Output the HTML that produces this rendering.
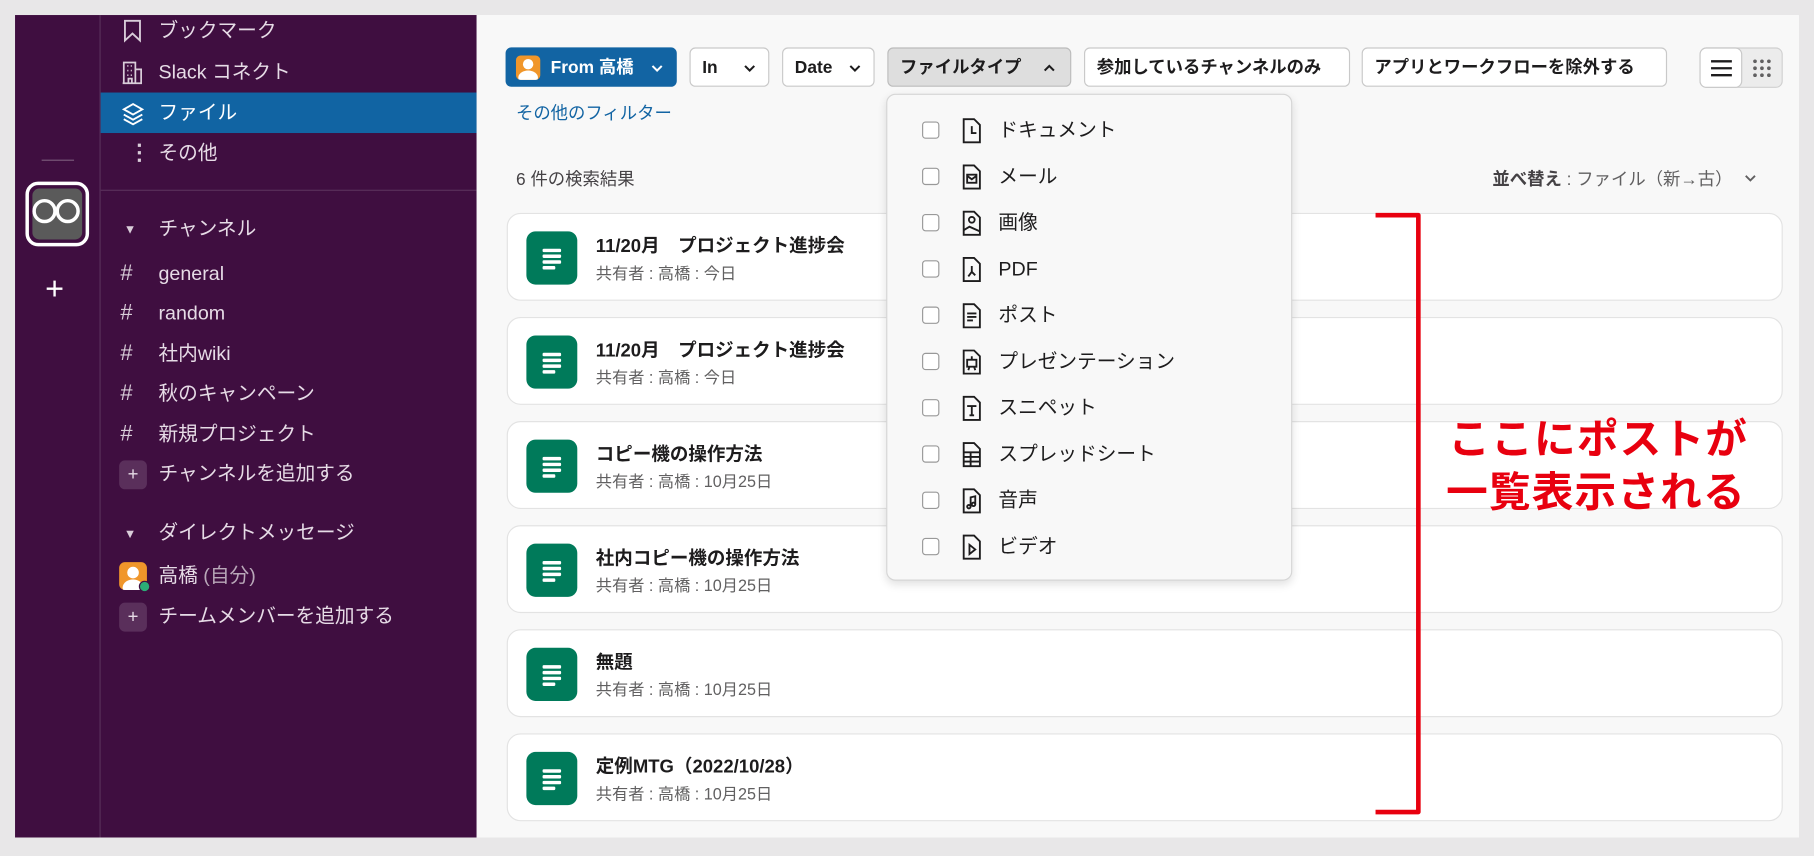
<!DOCTYPE html>
<html><head><meta charset="utf-8">
<style>
*{box-sizing:border-box;margin:0;padding:0}
html,body{width:1814px;height:856px;overflow:hidden;background:#e8e7e8;font-family:"Liberation Sans","Noto Sans CJK JP",sans-serif}
#w{position:absolute;left:0;top:0;width:1568px;height:740px;transform:scale(1.15689,1.15676);transform-origin:0 0}
.a{position:absolute}
.rail{left:13px;top:13px;width:73px;height:711px;background:#3f0e40}
.side{left:86px;top:13px;width:326px;height:711px;background:#3f0e40;border-left:1px solid #58305a}
.main{left:412px;top:13px;width:1143px;height:711px;background:#f8f8f8}
.si{position:absolute;left:137px;color:#e6dbe6;font-size:17px;line-height:20px;white-space:nowrap}
.ic{position:absolute;left:104px;color:#d9cdd9;font-size:19px;line-height:20px}
.btn{position:absolute;top:41px;height:34px;border:1px solid #c9c9c9;border-radius:5px;background:#fff;font-size:15px;font-weight:bold;color:#1d1c1d;line-height:33px;padding-left:10px;white-space:nowrap}
.chev{position:absolute;right:11px;top:13px}
.card{position:absolute;left:438px;width:1103px;height:76px;background:#fff;border:1px solid #e3e3e3;border-radius:12px}
.fi{position:absolute;left:16px;top:15px;width:44px;height:46px;background:#007a5a;border-radius:8px}
.fi i{position:absolute;left:14px;height:2.5px;background:#fff;border-radius:1px}
.ct{position:absolute;left:76px;top:14px;font-size:16px;font-weight:bold;color:#1d1c1d;white-space:nowrap}
.cs{position:absolute;left:76px;top:41px;font-size:14px;color:#616061;white-space:nowrap}
.dd{left:766px;top:81px;width:351px;height:421px;background:#f8f8f8;border:1px solid #d6d6d6;border-radius:8px;box-shadow:0 3px 8px rgba(0,0,0,.12)}
.row{position:absolute;left:30px;height:20px;width:300px}
.cb{position:absolute;left:0;top:2px;width:15px;height:15px;border:1.5px solid #999;border-radius:3px;background:#fff}
.fic{position:absolute;left:34px;top:-2px}
.lt{position:absolute;left:66px;top:0;font-size:17px;color:#1d1c1d;line-height:20px;white-space:nowrap}
.red{color:#e8000f;font-weight:bold;font-size:36px;line-height:44px;white-space:nowrap;letter-spacing:1px}
</style></head><body><div id="w">
<div class="a rail"></div>
<div class="a" style="left:36px;top:138px;width:28px;height:1px;background:#7a5a7b"></div>
<div class="a" style="left:22px;top:157px;width:55px;height:56px;border:3px solid #fff;border-radius:11px;background:#3f0e40;padding:3px"><div style="width:100%;height:100%;background:#5a5a5a;border-radius:6px;position:relative">
<div class="a" style="left:0px;top:9px;width:21px;height:21px;border:3px solid #fff;border-radius:50%"></div>
<div class="a" style="left:20px;top:9px;width:21px;height:21px;border:3px solid #fff;border-radius:50%"></div></div></div>
<div class="a" style="left:39px;top:236px;color:#fff;font-size:28px;line-height:28px;font-weight:300">+</div>
<div class="a side"></div>
<div class="a" style="left:87px;top:80px;width:325px;height:35px;background:#1164a3"></div>
<div class="a" style="left:87px;top:164px;width:325px;height:1px;background:#5a305b"></div>
<svg class="a" style="left:104px;top:16px" width="22" height="22" viewBox="0 0 22 22" fill="none" stroke="#d9cdd9" stroke-width="1.6"><path d="M4 2h13v17l-6.5-6-6.5 6z"/></svg>
<div class="si" style="top:17px">ブックマーク</div>
<svg class="a" style="left:104px;top:52px" width="22" height="22" viewBox="0 0 22 22" fill="none" stroke="#d9cdd9" stroke-width="1.5"><path d="M3 20V2h10v18M13 8h5v12H2M6 5h1M9 5h1M6 9h1M9 9h1M6 13h1M9 13h1M7 20v-4h3v4"/></svg>
<div class="si" style="top:53px">Slack コネクト</div>
<svg class="a" style="left:104px;top:88px" width="22" height="22" viewBox="0 0 22 22" fill="none" stroke="#fff" stroke-width="1.6"><path d="M11 2l8 4.5-8 4.5-8-4.5zM3 11l8 4.5 8-4.5M3 15l8 4.5 8-4.5"/></svg>
<div class="si" style="top:88px;color:#fff">ファイル</div>
<div class="ic" style="left:111px;top:123px;font-weight:bold">⋮</div>
<div class="si" style="top:123px">その他</div>
<div class="ic" style="left:107px;top:189px;font-size:11px">▼</div>
<div class="si" style="top:188px">チャンネル</div>
<div class="ic" style="top:227px">#</div><div class="si" style="top:227px">general</div>
<div class="ic" style="top:261px">#</div><div class="si" style="top:261px">random</div>
<div class="ic" style="top:296px">#</div><div class="si" style="top:296px">社内wiki</div>
<div class="ic" style="top:331px">#</div><div class="si" style="top:331px">秋のキャンペーン</div>
<div class="ic" style="top:366px">#</div><div class="si" style="top:366px">新規プロジェクト</div>
<div class="a" style="left:103px;top:398px;width:24px;height:25px;background:#5a2f5b;border-radius:5px;color:#e6dbe6;text-align:center;font-size:16px;line-height:25px">+</div>
<div class="si" style="top:400px">チャンネルを追加する</div>
<div class="ic" style="left:107px;top:452px;font-size:11px">▼</div>
<div class="si" style="top:451px">ダイレクトメッセージ</div>
<div class="a" style="left:103px;top:486px;width:24px;height:24px;background:#f0962a;border-radius:5px;overflow:hidden"><div class="a" style="left:7px;top:4px;width:10px;height:10px;border-radius:50%;background:#fff"></div><div class="a" style="left:3px;top:15px;width:18px;height:14px;border-radius:50%;background:#fff"></div></div>
<div class="a" style="left:120px;top:502px;width:10px;height:10px;border-radius:50%;background:#2bac76;border:1.5px solid #3f0e40"></div>
<div class="si" style="top:488px">高橋 <span style="color:#b9a8b9">(自分)</span></div>
<div class="a" style="left:103px;top:521px;width:24px;height:25px;background:#5a2f5b;border-radius:5px;color:#e6dbe6;text-align:center;font-size:16px;line-height:25px">+</div>
<div class="si" style="top:523px">チームメンバーを追加する</div>

<div class="a main"></div>
<div class="btn" style="left:437px;width:148px;background:#1264a3;border-color:#1264a3;color:#fff;padding-left:38px">From 高橋<svg class="chev" width="10" height="8"><path d="M1 2l4 4 4-4" fill="none" stroke="#fff" stroke-width="1.8"/></svg></div>
<div class="a" style="left:446px;top:48px;width:21px;height:21px;background:#f0962a;border-radius:4px;overflow:hidden"><div class="a" style="left:6px;top:3px;width:9px;height:9px;border-radius:50%;background:#fff"></div><div class="a" style="left:2px;top:13px;width:17px;height:12px;border-radius:50%;background:#fff"></div></div>
<div class="btn" style="left:596px;width:69px">In<svg class="chev" width="10" height="8"><path d="M1 2l4 4 4-4" fill="none" stroke="#1d1c1d" stroke-width="1.8"/></svg></div>
<div class="btn" style="left:676px;width:80px">Date<svg class="chev" width="10" height="8"><path d="M1 2l4 4 4-4" fill="none" stroke="#1d1c1d" stroke-width="1.8"/></svg></div>
<div class="btn" style="left:767px;width:159px;background:#dedede;border-color:#bcbcbc">ファイルタイプ<svg class="chev" style="right:13px" width="10" height="8"><path d="M1 6l4-4 4 4" fill="none" stroke="#1d1c1d" stroke-width="1.8"/></svg></div>
<div class="btn" style="left:937px;width:230px">参加しているチャンネルのみ</div>
<div class="btn" style="left:1177px;width:264px">アプリとワークフローを除外する</div>
<div class="a" style="left:1469px;top:41px;width:72px;height:35px;border:1px solid #d0d0d0;border-radius:6px;background:#ececec"></div>
<div class="a" style="left:1469px;top:41px;width:37px;height:35px;border:1px solid #c8c8c8;border-radius:6px;background:#fff"></div>
<svg class="a" style="left:1478px;top:50px" width="20" height="17"><path d="M1 3h18M1 9h18M1 15h18" stroke="#1d1c1d" stroke-width="2"/></svg>
<svg class="a" style="left:1515px;top:51px" width="16" height="16" fill="#616061"><circle cx="2" cy="2" r="1.6"/><circle cx="8" cy="2" r="1.6"/><circle cx="14" cy="2" r="1.6"/><circle cx="2" cy="8" r="1.6"/><circle cx="8" cy="8" r="1.6"/><circle cx="14" cy="8" r="1.6"/><circle cx="2" cy="14" r="1.6"/><circle cx="8" cy="14" r="1.6"/><circle cx="14" cy="14" r="1.6"/></svg>
<div class="a" style="left:446px;top:87px;font-size:15px;color:#1264a3">その他のフィルター</div>
<div class="a" style="left:446px;top:144px;font-size:15px;color:#454245">6 件の検索結果</div>
<div class="a" style="left:1290px;top:144px;font-size:15px;color:#616061;white-space:nowrap"><b style="color:#454245">並べ替え</b> : ファイル（新→古）<svg style="margin-left:10px;vertical-align:2px" width="10" height="8"><path d="M1 2l4 4 4-4" fill="none" stroke="#616061" stroke-width="1.6"/></svg></div>

<div class="card" style="top:184px"><div class="fi"><i style="top:15px;width:16px"></i><i style="top:20px;width:16px"></i><i style="top:25px;width:16px"></i><i style="top:30px;width:11px"></i></div><div class="ct">11/20月　プロジェクト進捗会</div><div class="cs">共有者 : 高橋 : 今日</div></div>
<div class="card" style="top:274px"><div class="fi"><i style="top:15px;width:16px"></i><i style="top:20px;width:16px"></i><i style="top:25px;width:16px"></i><i style="top:30px;width:11px"></i></div><div class="ct">11/20月　プロジェクト進捗会</div><div class="cs">共有者 : 高橋 : 今日</div></div>
<div class="card" style="top:364px"><div class="fi"><i style="top:15px;width:16px"></i><i style="top:20px;width:16px"></i><i style="top:25px;width:16px"></i><i style="top:30px;width:11px"></i></div><div class="ct">コピー機の操作方法</div><div class="cs">共有者 : 高橋 : 10月25日</div></div>
<div class="card" style="top:454px"><div class="fi"><i style="top:15px;width:16px"></i><i style="top:20px;width:16px"></i><i style="top:25px;width:16px"></i><i style="top:30px;width:11px"></i></div><div class="ct">社内コピー機の操作方法</div><div class="cs">共有者 : 高橋 : 10月25日</div></div>
<div class="card" style="top:544px"><div class="fi"><i style="top:15px;width:16px"></i><i style="top:20px;width:16px"></i><i style="top:25px;width:16px"></i><i style="top:30px;width:11px"></i></div><div class="ct">無題</div><div class="cs">共有者 : 高橋 : 10月25日</div></div>
<div class="card" style="top:634px"><div class="fi"><i style="top:15px;width:16px"></i><i style="top:20px;width:16px"></i><i style="top:25px;width:16px"></i><i style="top:30px;width:11px"></i></div><div class="ct">定例MTG（2022/10/28）</div><div class="cs">共有者 : 高橋 : 10月25日</div></div>

<svg class="a" style="left:1186px;top:182px" width="46" height="526"><path d="M3 4H40V520H3" fill="none" stroke="#e8000f" stroke-width="4" stroke-linejoin="round"/></svg>
<div class="a red" style="left:1252px;top:358px">ここにポストが</div>
<div class="a red" style="left:1250px;top:404px">一覧表示される</div>

<div class="a dd">
<div class="row" style="top:21px"><div class="cb"></div><svg class="fic" width="18" height="24" viewBox="0 0 18 24" fill="none" stroke="#1d1c1d" stroke-width="1.6"><path d="M2 2h9l5 5v15H2z"/><path d="M9 8v6h4"/></svg><div class="lt">ドキュメント</div></div>
<div class="row" style="top:61px"><div class="cb"></div><svg class="fic" width="18" height="24" viewBox="0 0 18 24" fill="none" stroke="#1d1c1d" stroke-width="1.6"><path d="M2 2h9l5 5v15H2z"/><rect x="5" y="10" width="8" height="7"/><path d="M5 11l4 3 4-3"/></svg><div class="lt">メール</div></div>
<div class="row" style="top:101px"><div class="cb"></div><svg class="fic" width="18" height="24" viewBox="0 0 18 24" fill="none" stroke="#1d1c1d" stroke-width="1.6"><path d="M2 2h9l5 5v15H2z"/><circle cx="9" cy="9" r="2.5"/><path d="M2 18l5-3 9 4"/></svg><div class="lt">画像</div></div>
<div class="row" style="top:141px"><div class="cb"></div><svg class="fic" width="18" height="24" viewBox="0 0 18 24" fill="none" stroke="#1d1c1d" stroke-width="1.6"><path d="M2 2h9l5 5v15H2z"/><path d="M9 9v5l-3 4M9 14l3 3"/></svg><div class="lt">PDF</div></div>
<div class="row" style="top:181px"><div class="cb"></div><svg class="fic" width="18" height="24" viewBox="0 0 18 24" fill="none" stroke="#1d1c1d" stroke-width="1.6"><path d="M2 2h9l5 5v15H2z"/><path d="M5 10h8M5 13h8M5 16h5"/></svg><div class="lt">ポスト</div></div>
<div class="row" style="top:221px"><div class="cb"></div><svg class="fic" width="18" height="24" viewBox="0 0 18 24" fill="none" stroke="#1d1c1d" stroke-width="1.6"><path d="M2 2h9l5 5v15H2z"/><rect x="5" y="10" width="8" height="6"/><path d="M9 7v3M7 16l-1 3M11 16l1 3"/></svg><div class="lt">プレゼンテーション</div></div>
<div class="row" style="top:261px"><div class="cb"></div><svg class="fic" width="18" height="24" viewBox="0 0 18 24" fill="none" stroke="#1d1c1d" stroke-width="1.6"><path d="M2 2h9l5 5v15H2z"/><path d="M5 10h8M9 10v8M7 18h4"/></svg><div class="lt">スニペット</div></div>
<div class="row" style="top:301px"><div class="cb"></div><svg class="fic" width="18" height="24" viewBox="0 0 18 24" fill="none" stroke="#1d1c1d" stroke-width="1.6"><path d="M2 2h9l5 5v15H2z"/><path d="M2 10h14M2 14h14M2 18h14M8 10v12"/></svg><div class="lt">スプレッドシート</div></div>
<div class="row" style="top:341px"><div class="cb"></div><svg class="fic" width="18" height="24" viewBox="0 0 18 24" fill="none" stroke="#1d1c1d" stroke-width="1.6"><path d="M2 2h9l5 5v15H2z"/><path d="M8 17V9l4-1v7"/><circle cx="6.5" cy="17" r="1.5"/><circle cx="10.5" cy="15" r="1.5"/></svg><div class="lt">音声</div></div>
<div class="row" style="top:381px"><div class="cb"></div><svg class="fic" width="18" height="24" viewBox="0 0 18 24" fill="none" stroke="#1d1c1d" stroke-width="1.6"><path d="M2 2h9l5 5v15H2z"/><path d="M7 10v8l5-4z"/></svg><div class="lt">ビデオ</div></div>
</div>
</div></body></html>
